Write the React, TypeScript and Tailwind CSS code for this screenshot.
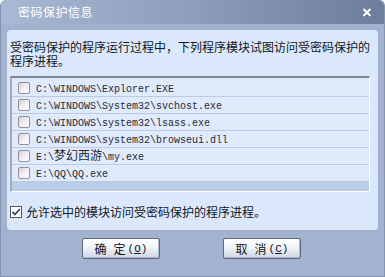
import React from "react";

const cjk = { fontFamily: '"Noto Sans CJK SC", "Noto Sans", sans-serif' };
const mono = { fontFamily: '"Liberation Mono", "DejaVu Sans Mono", monospace' };

function Path({ parts }: { parts: (string | { c: string })[] }) {
  return (
    <span className="whitespace-pre text-[#1f2a3a]">
      {parts.map((p, i) =>
        typeof p === "string" ? (
          <span key={i} style={mono} className="text-[10px]">
            {p}
          </span>
        ) : (
          <span key={i} style={cjk} className="text-[12px]">
            {p.c}
          </span>
        )
      )}
    </span>
  );
}

const rows: (string | { c: string })[][] = [
  ["C:\\WINDOWS\\Explorer.EXE"],
  ["C:\\WINDOWS\\System32\\svchost.exe"],
  ["C:\\WINDOWS\\system32\\lsass.exe"],
  ["C:\\WINDOWS\\system32\\browseui.dll"],
  ["E:\\", { c: "梦幻西游" }, "\\my.exe"],
  ["E:\\QQ\\QQ.exe"],
];

function Box() {
  return (
    <span className="w-[12px] h-[12px] shrink-0 rounded-[2px] border border-[#9c8aa0] bg-gradient-to-br from-[#d2d2d2] via-[#f0f0f0] to-white" />
  );
}

export default function App() {
  return (
    <div
      className="w-[385px] h-[277px] flex flex-col bg-[#a3b3cf] rounded-t-[6px] overflow-hidden border-l border-r border-b border-[#8594ae] text-[12px] leading-[14px]"
      style={cjk}
    >
      <div className="h-[24px] shrink-0 flex items-center pl-[17px] pr-[12px] bg-gradient-to-r from-[#a9b8d4] via-[#8d9dbb] to-[#6c7e9a]">
        <span className="text-white text-[12px] tracking-[0.5px]">密码保护信息</span>
        <span className="ml-auto flex items-center">
          <svg width="10" height="9" viewBox="0 0 10 9">
            <path d="M1.5 1 L8.5 8 M8.5 1 L1.5 8" stroke="#1b2430" strokeWidth="2.4" strokeOpacity="0.25" transform="translate(0.6,0.6)" />
            <path d="M1.5 1 L8.5 8 M8.5 1 L1.5 8" stroke="white" strokeWidth="2.2" />
          </svg>
        </span>
      </div>
      <div className="px-[6px] pt-[6px]">
        <div className="h-[200px] bg-[#dbe8fb] rounded-[4px] pt-[10px] px-[3px]">
          <div className="text-[#0f1724] leading-[14px] whitespace-nowrap">
            <div>受密码保护的程序运行过程中，下列程序模块试图访问受密码保护的</div>
            <div>程序进程。</div>
          </div>
          <div className="mt-[8px] w-[360px] h-[116px] border-t-2 border-l-2 border-t-[#7f8791] border-l-[#a2acb9] border-r border-b border-r-white border-b-white bg-[#dfebfc] flex flex-col pt-[2px]">
            {rows.map((r, i) => (
              <div
                key={i}
                className="h-[17px] shrink-0 flex items-center gap-[6px] pl-[6px] border-b border-[#bccbe2]"
              >
                <Box />
                <Path parts={r} />
              </div>
            ))}
            <div className="flex-1 bg-[#b9cce8]" />
          </div>
          <div className="mt-[13px] flex items-center gap-[4px]">
            <span className="w-[12px] h-[12px] flex items-center justify-center border border-[#4e5560] bg-white">
              <svg width="10" height="10" viewBox="0 0 10 10">
                <path d="M1.5 5 L4 7.5 L8.8 2" stroke="#3b4a5e" strokeWidth="1.8" fill="none" />
              </svg>
            </span>
            <span className="text-[#0f1724]">允许选中的模块访问受密码保护的程序进程。</span>
          </div>
        </div>
      </div>
      <div className="flex pl-[81px] gap-[63px] pt-[8px]">
        {[
          ["确", "定", "O"],
          ["取", "消", "C"],
        ].map(([a, b, k]) => (
          <div
            key={k}
            className="w-[78px] h-[21px] flex items-center justify-center border border-[#5d6a80] rounded-[2px] bg-gradient-to-b from-white via-[#eef2f8] to-[#cdd6e4] text-[#111] shadow-[inset_-1px_-1px_0_#aeb8c8]"
          >
            <span>{a}</span>
            <span className="ml-[7px]">{b}</span>
            <span style={mono} className="text-[11px] ml-[2px]">
              (<span className="underline">{k}</span>)
            </span>
          </div>
        ))}
      </div>
    </div>
  );
}
